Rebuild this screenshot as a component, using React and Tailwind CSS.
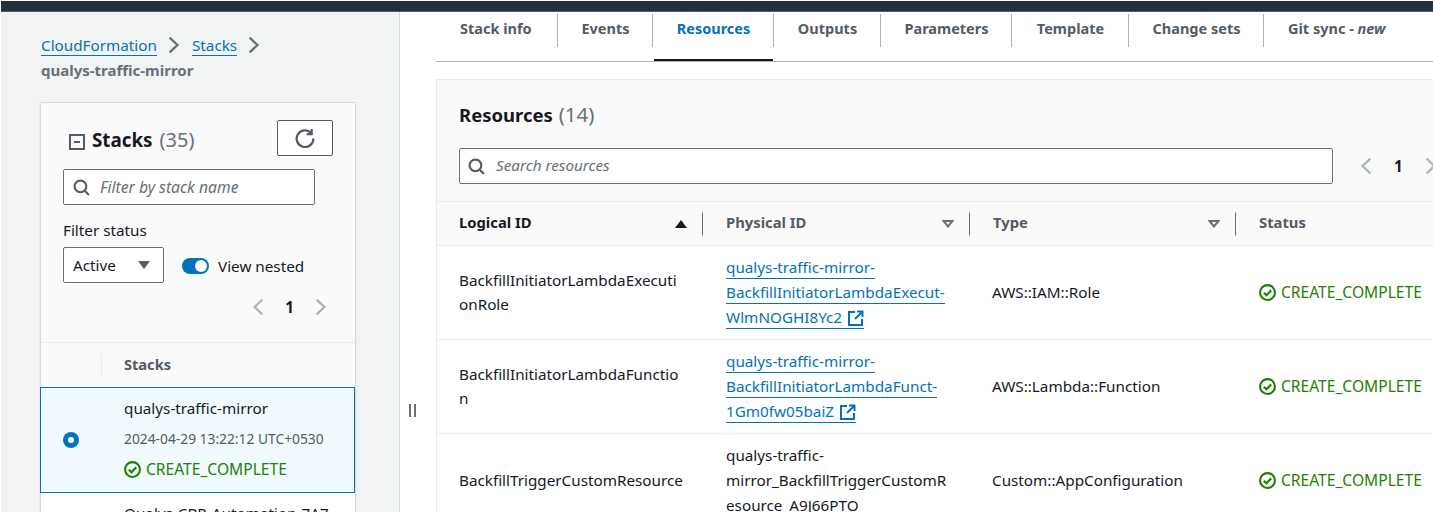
import React from "react";

function Check() {
  return (
    <svg viewBox="0 0 16 16" className="w-[17px] h-[17px] shrink-0" fill="none" stroke="#1d8102" strokeWidth="2">
      <circle cx="8" cy="8" r="7" />
      <path d="M4.500 8.200l2.500 2.300 4.500-4.500" />
    </svg>
  );
}

function SearchIcon() {
  return (
    <svg viewBox="0 0 16 16" className="w-[17px] h-[17px] shrink-0" fill="none" stroke="#545b64" strokeWidth="2">
      <circle cx="7" cy="7" r="5.500" />
      <path d="M11 11l4 4" />
    </svg>
  );
}

function Ext() {
  return (
    <svg viewBox="0 0 16 16" className="inline-block w-4 h-4 ml-[2px] align-[-3px]" fill="none" stroke="#0073bb" strokeWidth="2">
      <path d="M7 2H1v13h13V9" />
      <path d="M9 1.500h5.500V7M14 2L7 9" />
    </svg>
  );
}

function Chev({ dir = "right", color = "#aab7b8", size = "w-[18px] h-[18px]" }) {
  return (
    <svg viewBox="0 0 16 16" className={size} fill="none" stroke={color} strokeWidth="2">
      <path d={dir === "right" ? "M5 1.500L12 8l-7 6.500" : "M11 1.500L4 8l7 6.500"} />
    </svg>
  );
}

function Sort({ active }) {
  return active ? (
    <svg viewBox="0 0 12 8" className="w-3 h-2"><path d="M0 8L6 0l6 8z" fill="#16191f" /></svg>
  ) : (
    <svg viewBox="0 0 12 8" className="w-3 h-2" fill="none" stroke="#687078" strokeWidth="2"><path d="M1.500 1h9L6 6.500z" /></svg>
  );
}

const Tab = ({ children, active, w, last }) => (
  <div className={"relative h-[49px] shrink-0 flex items-start pt-[6px] justify-center font-bold text-[14.500px] " + w + " " + (active ? "text-[#0073bb]" : "text-[#545b64]")}>
    <span className="leading-5">{children}</span>
    {!last && <span className="absolute right-0 top-[2px] h-[33px] w-px bg-[#aab7b8]" />}
    {active && <span className="absolute left-px right-px bottom-0 h-[2px] bg-[#16191f]" />}
  </div>
);

const HeadCell = ({ children, sort, active, w, color = "text-[#545b64]", divider = true }) => (
  <div className={"relative shrink-0 flex items-center font-bold text-[14.800px] pb-[3px] " + w + " " + color}>
    <span className="leading-5">{children}</span>
    {sort && <span className="absolute right-[16px] top-1/2 -translate-y-1/2 flex"><Sort active={active} /></span>}
    {divider && <span className="absolute right-0 top-1/2 -translate-y-1/2 h-[23px] w-px bg-[#687078]" />}
  </div>
);

const Link = ({ children }) => (
  <span className="text-[#0073bb] border-b border-[#0073bb] inline-block leading-[22px] h-[23px] whitespace-nowrap">{children}</span>
);

const Row = ({ logical, physical, type }) => (
  <div className="flex h-[94px] w-[1100px] border-b border-[#eaeded] bg-white text-[#16191f]">
    <div className="w-[289px] shrink-0 pl-[22px] flex items-center"><span className="leading-6 whitespace-nowrap pb-[2px]">{logical}</span></div>
    <div className="w-[266px] shrink-0 flex items-center"><div className="leading-[25px]">{physical}</div></div>
    <div className="w-[267px] shrink-0 flex items-center">{type}</div>
    <div className="flex items-center gap-[5px] text-[#1d8102] text-[15.600px] whitespace-nowrap"><Check />CREATE_COMPLETE</div>
  </div>
);

export default function App() {
  return (
    <div className="h-[512px] w-[1433px] overflow-hidden bg-white pl-px pt-px flex flex-col [font-family:'Noto_Sans','Open_Sans',sans-serif] text-[15.250px] text-[#16191f]">
      <div className="h-[11px] shrink-0 bg-[#232f3e] border-b border-[#545b64]" />
      <div className="flex flex-1 min-h-0">
        {/* Left */}
        <aside className="w-[399px] shrink-0 bg-[#f2f3f3] border-r border-[#d5dbdb] pl-[39px] overflow-hidden">
          <div className="pt-[20px] h-[90px]">
            <div className="flex items-center h-[26px]">
              <span className="text-[#0073bb] border-b border-[#0073bb] leading-[20px] ml-px">CloudFormation</span>
              <span className="ml-[7px] mr-[10px]"><Chev color="#687078" /></span>
              <span className="text-[#0073bb] border-b border-[#0073bb] leading-[20px]">Stacks</span>
              <span className="ml-[7px]"><Chev color="#687078" /></span>
            </div>
            <div className="font-bold text-[#687078] text-[15px] leading-5 mt-[2px] ml-px">qualys-traffic-mirror</div>
          </div>
          <div className="w-[316px] h-[410px] bg-[#fafafa] border-x border-t border-[#d5dbdb] shadow-[0_1px_1px_0_rgba(0,28,36,0.3)] rounded-t-[2px]">
            <div className="h-[240px] border-b border-[#eaeded] px-[22px] pt-[17px]">
              <div className="flex items-start h-[36px]">
                <div className="flex items-center h-[36px] mt-[2px] w-[214px] pl-[6px]">
                  <svg viewBox="0 0 16 16" className="w-4 h-4 shrink-0 mt-[4px] mr-[7px]" fill="none" stroke="#545b64" strokeWidth="2">
                    <rect x="1" y="1" width="14" height="14" />
                    <path d="M5 8h6" />
                  </svg>
                  <span className="text-[18.800px] font-bold leading-6">Stacks</span>
                  <span className="text-[20px] text-[#687078] leading-6 ml-[7px]">(35)</span>
                </div>
                <div className="w-[56px] h-[36px] bg-white border border-[#545b64] rounded-[2px] flex items-center justify-center">
                  <svg viewBox="0 0 18 18" className="w-5 h-5" fill="none" stroke="#545b64" strokeWidth="2">
                    <path d="M14.500 4.500A7.500 7.500 0 1 0 16.500 9.500" />
                    <path d="M15 1v4.500h-4.500" />
                  </svg>
                </div>
              </div>
              <div className="mt-[13px] w-[252px] h-[36px] bg-white border border-[#687078] rounded-[2px] flex items-center pl-[9px] gap-[10px]">
                <SearchIcon />
                <span className="italic text-[#687078] text-[15.700px] pt-[2px]">Filter by stack name</span>
              </div>
              <div className="mt-[15px] leading-5">Filter status</div>
              <div className="mt-[7px] flex items-center">
                <div className="w-[101px] h-[36px] bg-white border border-[#687078] rounded-[2px] flex items-center justify-between pl-[9px] pr-[13px]">
                  <span className="text-[#16191f]">Active</span>
                  <svg viewBox="0 0 12 8" className="w-3 h-2"><path d="M0 0h12L6 8z" fill="#545b64" /></svg>
                </div>
                <div className="ml-[18px] w-[27px] h-4 rounded-full bg-[#0073bb] flex items-center justify-end pr-[2px] mt-px">
                  <span className="w-3 h-3 rounded-full bg-white" />
                </div>
                <span className="ml-[9px] mt-[2px]">View nested</span>
              </div>
              <div className="mt-[14px] flex items-center justify-end gap-[17px] pr-[4px] h-5">
                <Chev dir="left" />
                <span className="font-bold">1</span>
                <Chev />
              </div>
            </div>
            <div className="h-[44px] flex items-center relative">
              <span className="absolute left-[60px] top-[11px] h-[22px] w-px bg-[#eaeded]" />
              <span className="pl-[83px] font-bold text-[#545b64] text-[14.600px]">Stacks</span>
            </div>
            <div className="h-[106px] -ml-px bg-[#f1faff] border border-[#0073bb] flex items-center">
              <div className="w-[83px] pl-[22px] shrink-0">
                <div className="w-4 h-4 rounded-full bg-[#0073bb] flex items-center justify-center">
                  <span className="w-[6px] h-[6px] rounded-full bg-white" />
                </div>
              </div>
              <div className="-mt-[3px]">
                <div className="leading-5">qualys-traffic-mirror</div>
                <div className="mt-[11px] leading-5 text-[#545b64] text-[13.800px]">2024-04-29 13:22:12 UTC+0530</div>
                <div className="mt-[10px] flex items-center gap-[5px] text-[#1d8102] text-[15.600px] leading-5"><Check />CREATE_COMPLETE</div>
              </div>
            </div>
            <div className="h-[19px] bg-white pl-[83px] pt-[10px] leading-5 overflow-hidden whitespace-nowrap box-content">Qualys-CBR-Automation-7A7</div>
          </div>
        </aside>
        {/* Splitter */}
        <div className="w-[36px] shrink-0 relative">
          <div className="absolute left-[9px] top-[392px] flex gap-[3px]">
            <span className="w-[2px] h-[13px] bg-[#687078]" />
            <span className="w-[2px] h-[13px] bg-[#687078]" />
          </div>
        </div>
        {/* Right */}
        <main className="flex-1 min-w-0 overflow-hidden">
          <div className="flex h-[49px] border-b border-[#aab7b8] box-content">
            <Tab w="w-[122px] !justify-start pl-[24px]">Stack info</Tab>
            <Tab w="w-[95px]">Events</Tab>
            <Tab w="w-[121px]" active>Resources</Tab>
            <Tab w="w-[107px]">Outputs</Tab>
            <Tab w="w-[131px]">Parameters</Tab>
            <Tab w="w-[117px]">Template</Tab>
            <Tab w="w-[135px]">Change sets</Tab>
            <Tab w="w-[126px] !justify-start pl-[24px]" last>
              <span className="whitespace-nowrap">Git sync - <i className="font-bold">new</i></span>
            </Tab>
          </div>
          <div className="mt-[17px] border-l border-t border-[#eaeded] bg-[#fafafa]">
            <div className="h-[122px] px-[22px] pt-[22px] border-b border-[#eaeded]">
              <div className="leading-6 text-[18.500px]"><b>Resources</b> <span className="text-[#687078] text-[20.500px] ml-px">(14)</span></div>
              <div className="mt-[21px] flex items-center">
                <div className="w-[874px] h-[36px] bg-white border border-[#687078] rounded-[2px] flex items-center pl-[8px] gap-[11px] shrink-0">
                  <SearchIcon />
                  <span className="italic text-[#687078] pb-[2px]">Search resources</span>
                </div>
                <div className="ml-[25px] flex items-center gap-[18px] shrink-0">
                  <Chev dir="left" />
                  <span className="font-bold">1</span>
                  <Chev />
                </div>
              </div>
            </div>
            <div className="flex h-[44px] border-b border-[#eaeded] pl-[22px]">
              <HeadCell w="w-[244px]" sort active color="text-[#16191f]">Logical ID</HeadCell>
              <div className="w-[23px] shrink-0" />
              <HeadCell w="w-[244px]" sort>Physical ID</HeadCell>
              <div className="w-[23px] shrink-0" />
              <HeadCell w="w-[243px]" sort>Type</HeadCell>
              <div className="w-[23px] shrink-0" />
              <HeadCell w="w-[120px]" divider={false}>Status</HeadCell>
            </div>
            <Row
              logical={<>BackfillInitiatorLambdaExecuti<br />onRole</>}
              type="AWS::IAM::Role"
              physical={<><Link>qualys-traffic-mirror-</Link><br /><Link>BackfillInitiatorLambdaExecut-</Link><br /><Link>WlmNOGHI8Yc2 <Ext /></Link></>}
            />
            <Row
              logical={<>BackfillInitiatorLambdaFunctio<br />n</>}
              type="AWS::Lambda::Function"
              physical={<><Link>qualys-traffic-mirror-</Link><br /><Link>BackfillInitiatorLambdaFunct-</Link><br /><Link>1Gm0fw05baiZ <Ext /></Link></>}
            />
            <Row
              logical="BackfillTriggerCustomResource"
              type="Custom::AppConfiguration"
              physical={<>qualys-traffic-<br />mirror_BackfillTriggerCustomR<br />esource_A9J66PTO</>}
            />
          </div>
        </main>
      </div>
    </div>
  );
}
